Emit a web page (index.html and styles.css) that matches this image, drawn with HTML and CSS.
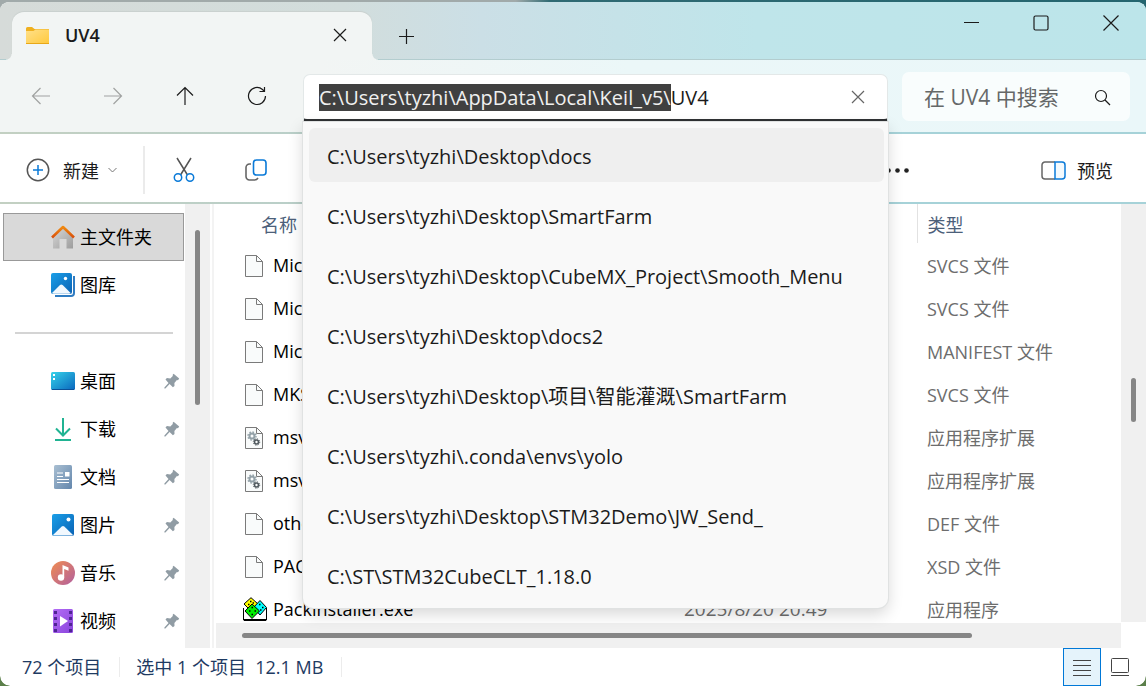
FILE: index.html
```html
<!DOCTYPE html>
<html lang="zh-CN">
<head>
    <meta charset="UTF-8">
    <meta name="viewport" content="width=device-width, initial-scale=1.0">
    <title>UV4</title>
    <link rel="stylesheet" href="styles.css">
</head>
<body>
    <!-- 公用图标 -->
    <svg class="sprite" aria-hidden="true">
        <defs>
            <linearGradient id="g-blue" x1="0" y1="0" x2="1" y2="1">
                <stop offset="0" stop-color="#1a9fe8"/><stop offset="1" stop-color="#0a62b4"/>
            </linearGradient>
            <linearGradient id="g-desk" x1="0" y1="0" x2="1" y2="1">
                <stop offset="0" stop-color="#35d3ea"/><stop offset="1" stop-color="#0a66bd"/>
            </linearGradient>
            <linearGradient id="g-doc" x1="0" y1="0" x2="1" y2="1">
                <stop offset="0" stop-color="#a9bfd2"/><stop offset="1" stop-color="#6386ac"/>
            </linearGradient>
            <linearGradient id="g-music" x1="0" y1="0" x2="1" y2="1">
                <stop offset="0" stop-color="#f08c50"/><stop offset="1" stop-color="#b2609f"/>
            </linearGradient>
            <linearGradient id="g-video" x1="0" y1="0" x2="1" y2="1">
                <stop offset="0" stop-color="#b36cf5"/><stop offset="1" stop-color="#8a45dc"/>
            </linearGradient>
            <linearGradient id="g-roof" x1="0" y1="0" x2="0" y2="1">
                <stop offset="0" stop-color="#f08a10"/><stop offset="1" stop-color="#d9500c"/>
            </linearGradient>
            <linearGradient id="g-wall" x1="0" y1="0" x2="1" y2="1">
                <stop offset="0" stop-color="#d8d8d8"/><stop offset="1" stop-color="#9c9c9c"/>
            </linearGradient>
            <linearGradient id="g-folder" x1="0" y1="0" x2="1" y2="1">
                <stop offset="0" stop-color="#ffe08a"/><stop offset="1" stop-color="#ffc93c"/>
            </linearGradient>
        </defs>
        <symbol id="pin" viewBox="0 0 16 16">
            <path d="M9.6 0.8l5.6 4.8-1.2 1.6-1.1-.2-2.5 3 .1 3-1.6 1.3-3.3-3.2L1.4 15.400H.4v-1l4.100-4.500L1.500 6.600l1.400-1.500 3.400.3 2.500-2.500-.1-1.200z" fill="#909ca4"/>
        </symbol>
        <symbol id="file" viewBox="0 0 18 22">
            <path d="M.5.5h11l6 6v15H.5z" fill="#f9fbfb" stroke="#7a7a7a"/>
            <path d="M11.500.5v6h6" fill="none" stroke="#7a7a7a"/>
        </symbol>
        <symbol id="dll" viewBox="0 0 18 22">
            <use href="#file"/>
            <circle cx="7" cy="9" r="2.500" fill="none" stroke="#93a1a8" stroke-width="2"/>
            <circle cx="7" cy="9" r="4" fill="none" stroke="#93a1a8" stroke-width="1.400" stroke-dasharray="1.600 1.540"/>
            <circle cx="11.500" cy="15" r="2" fill="none" stroke="#4f585d" stroke-width="1.600"/>
            <circle cx="11.500" cy="15" r="3.200" fill="none" stroke="#4f585d" stroke-width="1" stroke-dasharray="1.250 1.260"/>
        </symbol>
    </svg>

    <div class="window">
        <header class="titlebar">
            <div class="tab">
                <svg class="tab-icon" width="23" height="17" viewBox="0 0 23 17">
                    <path d="M0 1.500Q0 0 1.500 0H6l2.500 2H23v4H0z" fill="#efb01f"/>
                    <path d="M0 4h7.500l2-1.500H23V17H0z" fill="url(#g-folder)"/>
                    <path d="M0 16.500h23" stroke="#e8a818"/>
                </svg>
                <span class="tab-title">UV4</span>
                <button class="icon-button tab-close" aria-label="关闭标签页">
                    <svg width="14" height="14" viewBox="0 0 14 14"><path d="M1 1l12 12M13 1L1 13"/></svg>
                </button>
            </div>
            <button class="icon-button tab-add" aria-label="新标签页">
                <svg width="15" height="15" viewBox="0 0 15 15"><path d="M7.500 0v15M0 7.500h15"/></svg>
            </button>
            <div class="window-controls">
                <button class="icon-button" aria-label="最小化">
                    <svg width="16" height="16" viewBox="0 0 16 16"><path d="M1 7.500h15"/></svg>
                </button>
                <button class="icon-button" aria-label="最大化">
                    <svg width="16" height="16" viewBox="0 0 16 16"><rect x="1" y="1" width="14" height="14" rx="1.500"/></svg>
                </button>
                <button class="icon-button" aria-label="关闭">
                    <svg width="16" height="16" viewBox="0 0 16 16"><path d="M.5.5l15 15M15.500.5l-15 15"/></svg>
                </button>
            </div>
        </header>

        <div class="navbar">
            <div class="nav-buttons">
                <button class="icon-button" aria-label="后退" disabled>
                    <svg width="20" height="18" viewBox="0 0 20 18"><path d="M19 9H1.500M9.500 1l-8 8 8 8"/></svg>
                </button>
                <button class="icon-button" aria-label="前进" disabled>
                    <svg width="20" height="18" viewBox="0 0 20 18"><path d="M1 9h17.500M10.500 1l8 8-8 8"/></svg>
                </button>
                <button class="icon-button" aria-label="上移">
                    <svg width="18" height="20" viewBox="0 0 18 20"><path d="M9 19V1.500M1 9.500l8-8 8 8"/></svg>
                </button>
                <button class="icon-button" aria-label="刷新">
                    <svg width="20" height="20" viewBox="0 0 20 20"><path d="M18.500 10a8.500 8.500 0 1 1-3-6.500L17.500 5.500M17.500 1v4.500h-5"/></svg>
                </button>
            </div>
            <div class="address">
                <div class="address-box">
                    <input class="address-input" id="address" type="text" aria-label="地址" spellcheck="false" autocomplete="off" value="C:\Users\tyzhi\AppData\Local\Keil_v5\UV4">
                    <button class="icon-button address-clear" aria-label="清除">
                        <svg width="14" height="14" viewBox="0 0 14 14"><path d="M1 1l12 12M13 1L1 13"/></svg>
                    </button>
                </div>
                <ul class="suggestions">
                    <li class="suggestion active">C:\Users\tyzhi\Desktop\docs</li>
                    <li class="suggestion">C:\Users\tyzhi\Desktop\SmartFarm</li>
                    <li class="suggestion">C:\Users\tyzhi\Desktop\CubeMX_Project\Smooth_Menu</li>
                    <li class="suggestion">C:\Users\tyzhi\Desktop\docs2</li>
                    <li class="suggestion">C:\Users\tyzhi\Desktop\项目\智能灌溉\SmartFarm</li>
                    <li class="suggestion">C:\Users\tyzhi\.conda\envs\yolo</li>
                    <li class="suggestion">C:\Users\tyzhi\Desktop\STM32Demo\JW_Send_</li>
                    <li class="suggestion">C:\ST\STM32CubeCLT_1.18.0</li>
                </ul>
            </div>
            <div class="search">
                <input class="search-input" type="text" aria-label="搜索" placeholder="在 UV4 中搜索">
                <button class="icon-button" aria-label="开始搜索">
                    <svg width="17" height="17" viewBox="0 0 17 17"><circle cx="7" cy="7" r="5.500"/><path d="M11 11l5 5"/></svg>
                </button>
            </div>
        </div>

        <div class="toolbar">
            <div class="tool-group">
                <button class="tool-button tool-new">
                    <svg width="24" height="24" viewBox="0 0 24 24" fill="none" stroke-width="1.500">
                        <circle cx="12" cy="12" r="10.700" stroke="#555"/>
                        <path d="M12 7v10M7 12h10" stroke="#0a7ad8"/>
                    </svg>
                    <span>新建</span>
                    <svg width="9" height="6" viewBox="0 0 9 6" fill="none" stroke="#777"><path d="M.5 1l4 4 4-4"/></svg>
                </button>
                <span class="tool-divider"></span>
                <button class="tool-button tool-icon" aria-label="剪切">
                    <svg width="22" height="26" viewBox="0 0 22 26" fill="none" stroke-width="1.500">
                        <path d="M4 1l10.500 17M18 1L7.500 18" stroke="#555"/>
                        <circle cx="5" cy="20.500" r="3.700" stroke="#0a7ad8"/>
                        <circle cx="17" cy="20.500" r="3.700" stroke="#0a7ad8"/>
                    </svg>
                </button>
                <button class="tool-button tool-icon" aria-label="复制">
                    <svg width="22" height="22" viewBox="0 0 22 22" fill="none" stroke-width="1.600">
                        <path d="M6 5H4.500a3.500 3.500 0 0 0-3.500 3.500v9A3.500 3.500 0 0 0 4.500 21h5a4 4 0 0 0 3.500-2" stroke="#666"/>
                        <rect x="8.500" y="1" width="12.500" height="15" rx="3" stroke="#0a7ad8"/>
                    </svg>
                </button>
            </div>
            <div class="tool-group">
                <button class="tool-button tool-more" aria-label="查看更多">
                    <svg width="22" height="5" viewBox="0 0 22 5" fill="#222"><circle cx="1.500" cy="2.500" r="2.300"/><circle cx="10.500" cy="2.500" r="2.300"/><circle cx="19.500" cy="2.500" r="2.300"/></svg>
                </button>
                <button class="tool-button tool-preview">
                    <svg width="25" height="19" viewBox="0 0 25 19" fill="none" stroke-width="1.500">
                        <path d="M14 1H4a3 3 0 0 0-3 3v11a3 3 0 0 0 3 3h10" stroke="#666"/>
                        <path d="M14 1h7a3 3 0 0 1 3 3v11a3 3 0 0 1-3 3h-7z" stroke="#0a7ad8" fill="#f4fafd"/>
                    </svg>
                    <span>预览</span>
                </button>
            </div>
        </div>

        <main class="content">
            <nav class="sidebar">
                <div class="tree">
                    <a class="tree-item selected" href="#">
                        <svg width="24" height="24" viewBox="0 0 24 24">
                            <path d="M2 12L12 3l10 9v11.500h-6.500V14h-7v9.500H2z" fill="url(#g-wall)"/>
                            <path d="M1 12.500L12 2l11 10.500" fill="none" stroke="url(#g-roof)" stroke-width="2.600" stroke-linejoin="round"/>
                        </svg>
                        <span>主文件夹</span>
                    </a>
                    <a class="tree-item" href="#">
                        <svg width="24" height="24" viewBox="0 0 24 24">
                            <path d="M4 23h16a3 3 0 0 0 3-3V3" fill="none" stroke="#2f7cc2" stroke-width="2"/>
                            <rect width="21" height="21" rx="2" fill="url(#g-blue)"/>
                            <path d="M1 20l8-8q1.300-1.200 2.600 0l8 8q-.5.700-1.500.7H2.500Q1.500 20.700 1 20z" fill="#f1f8fe"/>
                            <circle cx="14.500" cy="5.500" r="1.700" fill="#fff"/>
                        </svg>
                        <span>图库</span>
                    </a>
                    <hr class="tree-divider">
                    <a class="tree-item" href="#">
                        <svg width="24" height="24" viewBox="0 0 24 24">
                            <rect y="3" width="24" height="18" rx="1.500" fill="url(#g-desk)"/>
                            <path d="M2 5h2v2H2zM2 9h2v2H2z" fill="#fff"/>
                            <path d="M1 20.500h22" stroke="#0b5098" stroke-width="1"/>
                        </svg>
                        <span>桌面</span>
                        <svg class="pin" width="16" height="16"><use href="#pin"/></svg>
                    </a>
                    <a class="tree-item" href="#">
                        <svg width="24" height="24" viewBox="0 0 24 24" fill="none" stroke="#20b392" stroke-width="2">
                            <path d="M12 1v17M5 11.500l7 7 7-7M4 23h16"/>
                        </svg>
                        <span>下载</span>
                        <svg class="pin" width="16" height="16"><use href="#pin"/></svg>
                    </a>
                    <a class="tree-item" href="#">
                        <svg width="24" height="24" viewBox="0 0 24 24">
                            <rect x="3" width="18" height="24" rx="1.500" fill="url(#g-doc)"/>
                            <path d="M6 8h6M6 11.500h6M6 14.500h12M6 17.500h12" stroke="#fff" stroke-width="1.200"/>
                            <path d="M14 7h4.500v4.500H14z" fill="#fff"/>
                        </svg>
                        <span>文档</span>
                        <svg class="pin" width="16" height="16"><use href="#pin"/></svg>
                    </a>
                    <a class="tree-item" href="#">
                        <svg width="24" height="24" viewBox="0 0 24 24">
                            <rect x="1" y="1" width="22" height="22" rx="2" fill="url(#g-blue)"/>
                            <path d="M2 22l8.700-8.500q1.300-1.200 2.600 0L22 22q-.5.500-1.500.5h-17Q2.500 22.500 2 22z" fill="#f1f8fe"/>
                            <circle cx="17.500" cy="6.500" r="2" fill="#fff"/>
                        </svg>
                        <span>图片</span>
                        <svg class="pin" width="16" height="16"><use href="#pin"/></svg>
                    </a>
                    <a class="tree-item" href="#">
                        <svg width="24" height="24" viewBox="0 0 24 24">
                            <circle cx="12" cy="12" r="12" fill="url(#g-music)"/>
                            <circle cx="10" cy="16.500" r="3.200" fill="#fff"/>
                            <path d="M11.500 16.500V4l6 2.500v3.300l-4.300-1.700v8.400z" fill="#fff"/>
                        </svg>
                        <span>音乐</span>
                        <svg class="pin" width="16" height="16"><use href="#pin"/></svg>
                    </a>
                    <a class="tree-item" href="#">
                        <svg width="24" height="24" viewBox="0 0 24 24">
                            <rect x="2" width="20" height="24" rx="1.500" fill="url(#g-video)"/>
                            <path d="M4.500 2v21M19.500 2v21" stroke="#4f2594" stroke-width="3" stroke-dasharray="3 3"/>
                            <path d="M9 7l8 5-8 5.500z" fill="#fff"/>
                        </svg>
                        <span>视频</span>
                        <svg class="pin" width="16" height="16"><use href="#pin"/></svg>
                    </a>
                </div>
                <div class="scroll-track tree-scroll"><div class="scroll-thumb"></div></div>
            </nav>

            <section class="files">
                <div class="files-view">
                    <div class="table-wrap">
                        <table class="file-table">
                            <thead>
                                <tr><th class="col-name">名称</th><th class="col-date">修改日期</th><th class="col-type">类型</th></tr>
                            </thead>
                            <tbody>
                                <tr><td><svg width="18" height="22"><use href="#file"/></svg>Micr</td><td></td><td>SVCS 文件</td></tr>
                                <tr><td><svg width="18" height="22"><use href="#file"/></svg>Micr</td><td></td><td>SVCS 文件</td></tr>
                                <tr><td><svg width="18" height="22"><use href="#file"/></svg>Micr</td><td></td><td>MANIFEST 文件</td></tr>
                                <tr><td><svg width="18" height="22"><use href="#file"/></svg>MKS</td><td></td><td>SVCS 文件</td></tr>
                                <tr><td><svg width="18" height="22"><use href="#dll"/></svg>msvc</td><td></td><td>应用程序扩展</td></tr>
                                <tr><td><svg width="18" height="22"><use href="#dll"/></svg>msvc</td><td></td><td>应用程序扩展</td></tr>
                                <tr><td><svg width="18" height="22"><use href="#file"/></svg>othe</td><td></td><td>DEF 文件</td></tr>
                                <tr><td><svg width="18" height="22"><use href="#file"/></svg>PAC</td><td></td><td>XSD 文件</td></tr>
                                <tr>
                                    <td class="exe"><svg width="24" height="24" viewBox="0 0 24 24" stroke="#000">
                                        <path d="M.5 11v12h23V11" fill="#fff"/>
                                        <path d="M1 23h22" stroke-width="2"/>
                                        <path d="M8 .7L15 7 8 14 1 7z" fill="#ff0"/>
                                        <path d="M17 3.500l6.500 7L17 18l-6.500-7.500z" fill="#0ff"/>
                                        <path d="M9 7l7.500 7L9 21.500 2 14z" fill="#0e0"/>
                                        <path d="M7 4.500h1.500M5 7.500h1.500M9.500 6h1.500M16 7.500h1.500M19 10.500h1.500M17 13h1.500M8.500 10.500H10M6 14h1.500M11.500 14H13M8.500 17.500H10" stroke-width="1.500"/>
                                    </svg>Packinstaller.exe</td>
                                    <td class="date">2025/8/20 20:49</td>
                                    <td>应用程序</td>
                                </tr>
                            </tbody>
                        </table>
                    </div>
                    <div class="scroll-track scroll-x"><div class="scroll-thumb"></div></div>
                </div>
                <div class="scroll-track scroll-y"><div class="scroll-thumb"></div></div>
            </section>
        </main>

        <footer class="statusbar">
            <span class="status-item">72 个项目</span>
            <span class="status-item">选中 1 个项目&nbsp; 12.1 MB</span>
            <div class="view-buttons">
                <button class="view-button current" aria-label="详细信息">
                    <svg width="18" height="17" viewBox="0 0 18 17"><path d="M0 1.500h18M0 6.500h18M0 11.500h18M0 16.500h18"/></svg>
                </button>
                <button class="view-button" aria-label="大缩略图">
                    <svg width="18" height="18" viewBox="0 0 18 18"><rect x=".5" y=".5" width="17" height="14" rx="1"/><path d="M0 17.500h18"/></svg>
                </button>
            </div>
        </footer>
    </div>

    <script>
        // 选中上级路径部分
        const address = document.getElementById('address');
        address.focus();
        address.setSelectionRange(0, address.value.lastIndexOf('\\') + 1);
    </script>
</body>
</html>
```
FILE: styles.css
```css
* {
    box-sizing: border-box;
}
body {
    margin: 0;
    font-family: "Open Sans", "Noto Sans CJK SC", sans-serif;
    font-size: 18px;
    color: #1b1b1b;
    background: linear-gradient(to right, #a1aaaa 0, #a1aaaa 45%, #2f6a73 48%, #24656f 100%) top / 100% 20px no-repeat, #5b7f4a;
}
button {
    border: none;
    background: none;
    padding: 0;
    font: inherit;
    color: inherit;
}
.sprite {
    position: absolute;
    width: 0;
    height: 0;
}
.window {
    display: flex;
    flex-direction: column;
    height: 100vh;
    border-top: 2px solid transparent;
    border-radius: 10px;
    overflow: hidden;
    background: #fff;
    background-clip: padding-box;
}
.icon-button {
    display: flex;
    align-items: center;
    justify-content: center;
}
.icon-button svg {
    fill: none;
    stroke: #1b1b1b;
    stroke-width: 1.2;
}

/* 标题栏 */
.titlebar {
    display: flex;
    flex: none;
    height: 58px;
    padding-left: 12px;
    background: linear-gradient(to right, #d6dbd9 0, #d2dddc 30%, #cbdfe6 42%, #bfe5ea 66%, #bce5ea 100%);
    box-shadow: inset 0 -1px #b3cdcf;
}
.tab {
    position: relative;
    display: flex;
    align-items: center;
    width: 360px;
    margin-top: 10px;
    padding: 0 24px 2px 14px;
    background: #f2f5f4;
    border-radius: 12px 12px 0 0;
    box-shadow: 0 -1px 1px #c9d0ce;
}
.tab::before,
.tab::after {
    content: "";
    position: absolute;
    bottom: 0;
    width: 6px;
    height: 6px;
}
.tab::before {
    right: 100%;
    background: radial-gradient(circle at 0 0, transparent 5px, #f2f5f4 6px);
}
.tab::after {
    left: 100%;
    background: radial-gradient(circle at 100% 0, transparent 5px, #f2f5f4 6px);
}
.tab-title {
    margin-left: 16px;
    font-size: 18px;
    font-weight: 600;
}
.tab-close {
    width: 16px;
    height: 16px;
    margin-left: auto;
}
.tab-add {
    width: 68px;
    padding-top: 10px;
}
.window-controls {
    display: flex;
    margin-left: auto;
    height: 42px;
}
.window-controls .icon-button {
    width: 70px;
}

/* 导航栏 */
.navbar {
    display: flex;
    flex: none;
    align-items: center;
    height: 74px;
    padding: 0 16px 0 5px;
    background: linear-gradient(to right, #f2f5f4 0, #f2f5f4 28%, #ebf7f8 55%, #eaf7f9 100%);
    border-bottom: 2px solid;
    border-image: linear-gradient(to right, #c3d0c2 0, #b9cfc9 28%, #a6d2d8 75%) 1;
}
.nav-buttons {
    display: flex;
    margin-right: 10px;
}
.nav-buttons .icon-button {
    width: 72px;
    height: 48px;
}
.nav-buttons .icon-button:disabled svg {
    stroke: #a0a2a1;
}
.address {
    position: relative;
    z-index: 2;
    flex: 1;
    min-width: 0;
    margin-top: 3px;
    margin-right: 14px;
}
.address-box {
    display: flex;
    align-items: center;
    height: 48px;
    padding: 0 21px 0 15px;
    background: #fff;
    border: 1px solid #e3e8e8;
    border-bottom: 3px solid #2f3133;
    border-radius: 7px 7px 4px 4px;
}
.address-input {
    flex: 1;
    min-width: 0;
    padding: 2px 0 0;
    border: none;
    outline: none;
    background: none;
    font: inherit;
    font-size: 20px;
    color: #1b1b1b;
    caret-color: transparent;
}
.address-input::selection {
    background: #404040;
    color: #f0f0f0;
}
.address-clear svg {
    stroke: #666;
}
.address-clear {
    width: 16px;
    height: 16px;
}
.suggestions {
    position: absolute;
    top: 100%;
    left: 0;
    right: 0;
    display: flex;
    flex-direction: column;
    gap: 6px;
    margin: 0;
    padding: 6px 4px 6px 6px;
    list-style: none;
    background: #f9f9f9;
    border-radius: 0 0 10px 10px;
    box-shadow: 0 0 0 1px #e0e2e2, 0 6px 16px rgba(0, 0, 0, 0.16);
}
.suggestion {
    height: 54px;
    padding: 2px 18px 0;
    border-radius: 6px;
    font-size: 20px;
    line-height: 54px;
    white-space: nowrap;
}
.suggestion.active {
    background: #efefef;
}
.search {
    display: flex;
    align-items: center;
    width: 228px;
    height: 49px;
    padding: 2px 19px 0 22px;
    background: #f9fdfd;
    border-radius: 7px;
}
.search-input {
    flex: 1;
    min-width: 0;
    padding: 0;
    border: none;
    outline: none;
    background: none;
    font: inherit;
    font-size: 21px;
}
.search-input::placeholder {
    color: #656868;
    opacity: 1;
}

/* 工具栏 */
.toolbar {
    display: flex;
    flex: none;
    justify-content: space-between;
    height: 70px;
    padding: 4px 33px 0 26px;
    border-bottom: 2px solid;
    border-image: linear-gradient(to right, #c3d0c2 0, #b9cfc9 28%, #a6d2d8 75%) 1;
}
.tool-group {
    display: flex;
    align-items: center;
}
.tool-button {
    display: flex;
    align-items: center;
    height: 48px;
}
.tool-new {
    gap: 13px;
    padding-right: 26px;
}
.tool-new svg + span {
    margin-right: -4px;
}
.tool-divider {
    width: 2px;
    height: 48px;
    margin-right: 3px;
    background: #ebebeb;
}
.tool-icon {
    justify-content: center;
    width: 72px;
}
.tool-more {
    margin-right: 132px;
}
.tool-preview {
    gap: 11px;
}

/* 主体 */
.content {
    display: flex;
    flex: 1;
    min-height: 0;
}
.sidebar {
    display: flex;
    flex: none;
    width: 214px;
    border-right: 2px solid #f3f3f3;
}
.tree {
    flex: 1;
    padding: 9px 1px 0 3px;
    overflow: hidden;
}
.tree-item {
    display: flex;
    align-items: center;
    gap: 5px;
    height: 48px;
    padding: 0 3px 0 47px;
    border: 1px solid transparent;
    color: #000;
    text-decoration: none;
    white-space: nowrap;
}
.tree-item span {
    padding-bottom: 2px;
}
.tree-item.selected {
    background: #d9d9d9;
    border-color: #999;
}
.tree-item .pin {
    margin-left: auto;
}
.tree-divider {
    height: 2px;
    margin: 23px 11px 23px 12px;
    border: none;
    background: #d4d4d4;
}
.scroll-track {
    flex: none;
    background: #f0f0f0;
}
.scroll-thumb {
    background: #868686;
    border-radius: 3px;
}
.tree-scroll {
    width: 25px;
    margin-right: 2px;
    padding: 26px 10px 0;
}
.tree-scroll .scroll-thumb {
    height: 175px;
}
.files {
    display: flex;
    flex: 1;
    min-width: 0;
}
.files-view {
    display: flex;
    flex-direction: column;
    flex: 1;
    min-width: 0;
    padding-left: 2px;
}
.table-wrap {
    flex: 1;
    min-height: 0;
    overflow: hidden;
}
.file-table {
    width: 100%;
    border-collapse: collapse;
    table-layout: fixed;
}
.file-table th {
    height: 39px;
    padding: 1px 0 0 10px;
    font-weight: normal;
    text-align: left;
    color: #4c607a;
}
.file-table .col-name {
    width: 458px;
    padding-left: 45px;
}
.file-table .col-date {
    width: 243px;
}
.file-table .col-type {
    border-left: 1px solid #e2e2e2;
}
.file-table td {
    height: 43px;
    padding: 0 0 0 10px;
    color: #6d6d6d;
    white-space: nowrap;
}
.file-table td:first-child {
    padding-left: 29px;
    color: #000;
}
.file-table td svg {
    margin-right: 10px;
    vertical-align: -5px;
}
.file-table td.exe:first-child {
    padding-left: 27px;
}
.file-table td.exe svg {
    margin-right: 6px;
}
.file-table td.date {
    font-size: 19px;
}
.scroll-x {
    height: 25px;
    padding: 10px 149px 0 26px;
}
.scroll-x .scroll-thumb {
    height: 5px;
}
.scroll-y {
    width: 25px;
    margin-bottom: 26px;
    padding: 174px 10px 0;
}
.scroll-y .scroll-thumb {
    height: 44px;
}

/* 状态栏 */
.statusbar {
    display: flex;
    flex: none;
    align-items: center;
    height: 38px;
    padding: 0 7px 0 22px;
    color: #1e3a62;
}
.status-item {
    margin-right: 16px;
    padding-right: 18px;
    line-height: 20px;
    border-right: 1px solid #ececec;
}
.view-buttons {
    display: flex;
    margin-left: auto;
}
.view-button {
    display: flex;
    align-items: center;
    justify-content: center;
    width: 38px;
    height: 38px;
    border: 1px solid transparent;
}
.view-button.current {
    background: #e5f3fb;
    border-color: #0078d7;
}
.view-button svg {
    fill: none;
    stroke: #444;
}
```
